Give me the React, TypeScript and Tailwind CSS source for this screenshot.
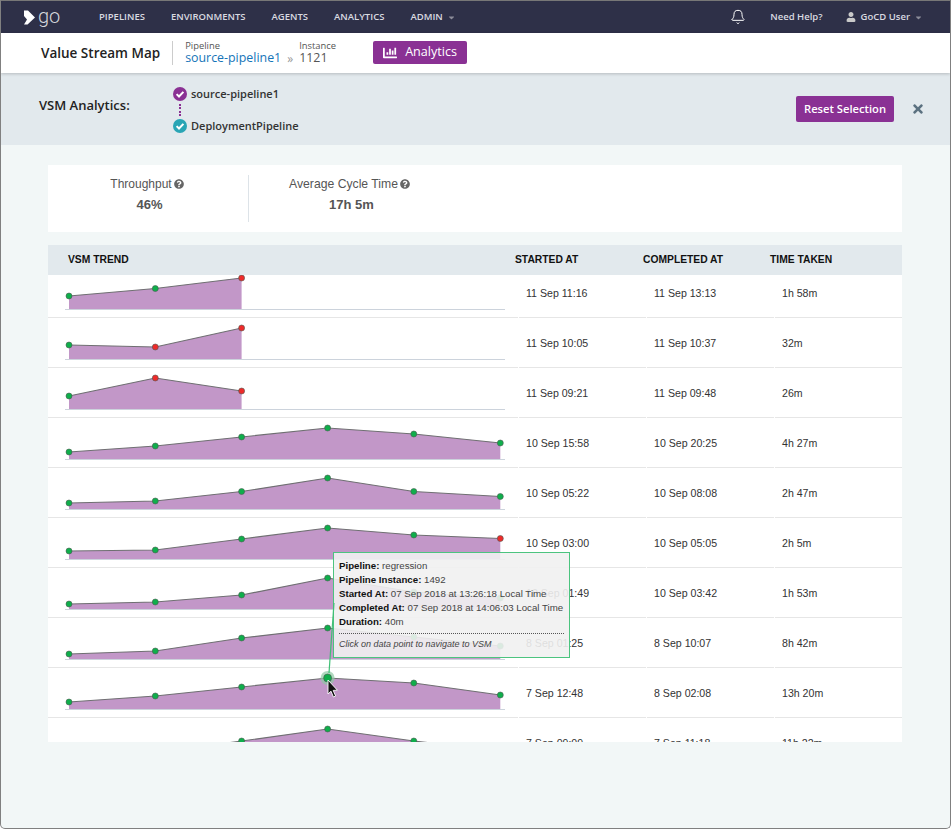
import { Bell } from "lucide-react";
import { FaCaretDown, FaChartBar, FaQuestionCircle, FaTimes, FaUser } from "react-icons/fa";

const XS = [69, 155.3, 241.6, 327.6, 413.8, 500.3];

type Row = {
  ys: number[];
  reds: number[];
  started: string;
  completed: string;
  taken: string;
};

// y values are relative to the row box (50px tall, baseline at 42)
const rows: Row[] = [
  { ys: [29, 21.5, 11], reds: [2], started: "11 Sep 11:16", completed: "11 Sep 13:13", taken: "1h 58m" },
  { ys: [28, 30, 11], reds: [1, 2], started: "11 Sep 10:05", completed: "11 Sep 10:37", taken: "32m" },
  { ys: [29, 11, 24], reds: [1, 2], started: "11 Sep 09:21", completed: "11 Sep 09:48", taken: "26m" },
  { ys: [35, 29, 20, 11, 17, 26], reds: [], started: "10 Sep 15:58", completed: "10 Sep 20:25", taken: "4h 27m" },
  { ys: [36, 34, 24.5, 11, 24.5, 29.5], reds: [], started: "10 Sep 05:22", completed: "10 Sep 08:08", taken: "2h 47m" },
  { ys: [34, 33, 22, 11, 18, 21.5], reds: [5], started: "10 Sep 03:00", completed: "10 Sep 05:05", taken: "2h 5m" },
  { ys: [37, 35, 28, 11, 25, 31], reds: [], started: "10 Sep 01:49", completed: "10 Sep 03:42", taken: "1h 53m" },
  { ys: [37, 34, 21, 11, 20, 29], reds: [], started: "8 Sep 01:25", completed: "8 Sep 10:07", taken: "8h 42m" },
  { ys: [35, 29, 20, 11, 16, 28], reds: [], started: "7 Sep 12:48", completed: "8 Sep 02:08", taken: "13h 20m" },
  { ys: [46, 36, 24, 12, 24, 34], reds: [], started: "7 Sep 09:09", completed: "7 Sep 11:18", taken: "11h 22m" },
];

function Sparkline({ row, hot }: { row: Row; hot: boolean }) {
  const pts = row.ys.map((y, i) => `${XS[i] - 48},${y}`);
  const last = XS[row.ys.length - 1] - 48;
  return (
    <svg width="463" height="49" className="-mt-px block">
      <polygon points={`21,42 ${pts.join(" ")} ${last},42`} fill="#c297c8" />
      <polyline points={pts.join(" ")} fill="none" stroke="#6f6f72" strokeWidth="1.2" />
      <line x1="17" x2="457" y1="42.5" y2="42.5" stroke="#ccd3dc" />
      {row.ys.map((y, i) => {
        const big = hot && i === 3;
        return (
          <g key={i}>
            {big && <circle cx={XS[i] - 48} cy={y} r="7" fill="#8fc8a4" opacity="0.7" />}
            <circle
              cx={XS[i] - 48}
              cy={y}
              r={big ? 4 : 3}
              fill={row.reds.includes(i) ? "#ee2a2a" : "#0fae4b"}
              stroke="#4d5a52"
              strokeWidth="0.6"
            />
          </g>
        );
      })}
    </svg>
  );
}

function CheckDot({ color }: { color: string }) {
  return (
    <svg width="14" height="14" viewBox="0 0 14 14" className="shrink-0">
      <circle cx="7" cy="7" r="7" fill={color} />
      <path d="M3.6 7.1 L6 9.5 L10.4 4.9" fill="none" stroke="#fff" strokeWidth="2" />
    </svg>
  );
}

function Logo() {
  return (
    <div className="flex items-center">
      <svg width="11" height="15" viewBox="0 0 11 15">
        <path d="M0 0.5 L4 0.5 L11 7.5 L3.5 14.5 L0 14.5 L3 9.5 L0 6 Z" fill="#fff" />
      </svg>
      <span className="-mt-[3px] ml-[3px] [font-family:Roboto,sans-serif] text-[20px] leading-none font-light text-[#d5d6dc]">go</span>
    </div>
  );
}

function Tip() {
  return (
    <div className="absolute top-[552px] left-[332px] z-10 h-[106px] w-[237px] border border-[#4cc47f] bg-[#f1f1f1]/90 px-[5px] pt-[6px] [font-family:'Liberation_Sans',sans-serif] text-[9.7px] leading-[14px] text-[#444]">
      <div><b className="text-[#111]">Pipeline:</b> regression</div>
      <div><b className="text-[#111]">Pipeline Instance:</b> 1492</div>
      <div><b className="text-[#111]">Started At:</b> 07 Sep 2018 at 13:26:18 Local Time</div>
      <div><b className="text-[#111]">Completed At:</b> 07 Sep 2018 at 14:06:03 Local Time</div>
      <div><b className="text-[#111]">Duration:</b> 40m</div>
      <div className="mt-[4px] border-t border-dotted border-[#555] pt-[3px] text-[9px] italic">Click on data point to navigate to VSM</div>
    </div>
  );
}

// leader line from the tooltip down to the hovered point, and the mouse pointer on top
function Pointer() {
  return (
    <svg width="20" height="110" viewBox="0 0 20 110" className="absolute top-[595px] left-[320px] z-20">
      <line x1="13" y1="8" x2="8" y2="78" stroke="#3fbf75" strokeWidth="1.2" />
      <path
        d="M7 85 L7 99 L10 96.2 L12.4 102 L14.6 101 L12.2 95.4 L16.4 95.2 Z"
        fill="#111"
        stroke="#fff"
        strokeWidth="0.9"
      />
    </svg>
  );
}

export default function App() {
  return (
    <div className="relative flex h-[829px] w-[951px] flex-col overflow-hidden rounded-b-[5px] border border-t-0 border-[#808080] bg-[#f2f7f7] [font-family:'Open_Sans',sans-serif]">
      <nav className="flex h-[33px] shrink-0 items-center border-t border-[#777] bg-[#2e3048] text-[9.5px] font-semibold text-[#d9dae0]">
        <div className="ml-[23px] w-[75px]"><Logo /></div>
        <div className="flex gap-[26px]">
          <span>PIPELINES</span>
          <span>ENVIRONMENTS</span>
          <span>AGENTS</span>
          <span>ANALYTICS</span>
          <span className="flex items-center gap-[4px]">
            ADMIN
            <FaCaretDown size={9} className="text-[#8b8c99]" />
          </span>
        </div>
        <div className="ml-auto flex items-center">
          <Bell size={16} strokeWidth={1.5} className="text-white" />
          <span className="ml-[24px]">Need Help?</span>
          <FaUser size={10} className="ml-[23px] text-[#c9c9c9]" />
          <span className="ml-[5px]">GoCD User</span>
          <FaCaretDown size={9} className="mr-[27px] ml-[4px] text-[#8b8c99]" />
        </div>
      </nav>

      <header className="z-[5] flex h-[40px] shrink-0 items-center bg-white shadow-[0_1px_3px_rgba(0,0,0,0.2)]">
        <span className="ml-[40px] text-[13.5px] font-semibold text-[#222]">Value Stream Map</span>
        <div className="ml-[12px] h-[24px] w-px bg-[#ccc]" />
        <div className="ml-[12px] flex flex-col">
          <span className="text-[9.4px] leading-[10px] text-[#555]">Pipeline</span>
          <span className="text-[12.4px] leading-[14px] text-[#1574b8]">source-pipeline1</span>
        </div>
        <span className="mt-[11px] w-[18px] text-center text-[12px] leading-none text-[#999]">»</span>
        <div className="-mt-px flex flex-col">
          <span className="text-[9.4px] leading-[10px] text-[#555]">Instance</span>
          <span className="text-[12.4px] leading-[14px] text-[#555]">1121</span>
        </div>
        <button className="-mt-px ml-[37px] flex h-[23px] w-[94px] items-center justify-center gap-[8px] rounded-[2px] bg-[#8a3194] text-[12.6px] text-white">
          <FaChartBar size={14} />
          Analytics
        </button>
      </header>

      <section className="flex h-[72px] shrink-0 items-center bg-[#e2e9ed] pr-[26px] pl-[38px]">
        <span className="mb-[6px] w-[134px] text-[13px] font-semibold text-[#222]">VSM Analytics:</span>
        <div className="mt-px flex flex-col text-[11px] leading-[14px] font-semibold text-[#333]">
          <div className="flex items-center gap-[4px]">
            <CheckDot color="#8a3194" />
            <span>source-pipeline1</span>
          </div>
          <div className="my-[3px] ml-[6px] h-[12px] border-l-2 border-dotted border-[#8a3194]" />
          <div className="flex items-center gap-[4px]">
            <CheckDot color="#29a5b5" />
            <span>DeploymentPipeline</span>
          </div>
        </div>
        <button className="ml-auto flex h-[26px] w-[98px] items-center justify-center rounded-[2px] bg-[#8a3194] text-[11.2px] font-semibold text-white">
          Reset Selection
        </button>
        <FaTimes size={14} className="mr-[-1px] ml-[17px] text-[#5b7180]" />
      </section>

      <main className="relative mt-[20px] ml-[47px] w-[854px]">
        <div className="flex h-[67px] bg-white [font-family:'Liberation_Sans',sans-serif] text-[#555]">
          <div className="my-[10px] flex w-[201px] flex-col items-center border-r border-[#dde3e8]">
            <div className="flex items-center gap-[2px] pr-[2px] text-[12px] leading-[18px]">
              Throughput <FaQuestionCircle size={10} className="text-[#666]" />
            </div>
            <div className="mt-[2px] ml-[3px] text-[13px] font-bold">46%</div>
          </div>
          <div className="my-[10px] flex w-[202px] flex-col items-center">
            <div className="flex items-center gap-[2px] pr-[1px] text-[12.2px] leading-[18px]">
              Average Cycle Time <FaQuestionCircle size={10} className="text-[#666]" />
            </div>
            <div className="mt-[2px] ml-[3px] text-[13px] font-bold">17h 5m</div>
          </div>
        </div>

        <div className="relative mt-[13px] h-[497px] overflow-hidden bg-white [font-family:'Liberation_Sans',sans-serif]">
          <div className="relative z-[1] grid h-[30px] grid-cols-[464px_127px_127px_136px] items-center bg-[#e2e9ed] text-[10.3px] font-bold text-[#111]">
            <span className="pl-[20px]">VSM TREND</span>
            <span className="pl-[3px]">STARTED AT</span>
            <span className="pl-[4px]">COMPLETED AT</span>
            <span className="pl-[4px]">TIME TAKEN</span>
          </div>
          <div className="-mt-[7px]">
            {rows.map((row, i) => (
              <div key={i} className="grid h-[50px] grid-cols-[470px_128px_128px_128px] text-[10.6px] text-[#333]">
                <div className="border-b border-[#e6e6e6]"><Sparkline row={row} hot={i === 8} /></div>
                <div className="ml-px flex items-center border-b border-[#e6e6e6] pt-[2px] pl-[7px]">{row.started}</div>
                <div className="ml-px flex items-center border-b border-[#e6e6e6] pt-[2px] pl-[7px]">{row.completed}</div>
                <div className="ml-px flex items-center border-b border-[#e6e6e6] pt-[2px] pl-[7px]">{row.taken}</div>
              </div>
            ))}
          </div>
        </div>
      </main>
      <Tip />
      <Pointer />
    </div>
  );
}
